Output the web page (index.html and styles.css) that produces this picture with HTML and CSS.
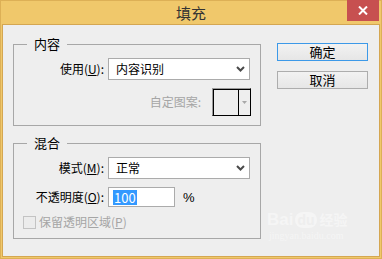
FILE: index.html
```html
<!DOCTYPE html>
<html lang="zh-CN">
  <head>
    <meta charset="UTF-8" />
    <meta name="viewport" content="width=device-width, initial-scale=1.0" />
    <title>填充</title>
    <link rel="stylesheet" href="styles.css">
  </head>
  <body>
    <div class="window">
      <div class="titlebar">
        <span class="title">填充</span>
        <div class="close">
          <svg width="10" height="9" viewBox="0 0 10 9">
            <path d="M1 0.5L9 8.5M9 0.5L1 8.5" stroke="#fff" stroke-width="2" />
          </svg>
        </div>
      </div>

      <div class="client">
        <div class="main">
          <fieldset class="group">
            <legend>内容</legend>
            <div class="row">
              <label class="label">使用(<u>U</u>):</label>
              <div class="select">
                <span>内容识别</span>
                <svg class="chevron" width="9" height="6" viewBox="0 0 9 6">
                  <path d="M1 1L4.5 4.5L8 1" fill="none" stroke="#4a4a4a" stroke-width="2" />
                </svg>
              </div>
            </div>
            <div class="pattern-row">
              <span class="label disabled">自定图案:</span>
              <div class="pattern">
                <div class="swatch"></div>
                <div class="pattern-arrow">
                  <svg width="5" height="3" viewBox="0 0 5 3">
                    <path d="M0 0H5L2.5 3Z" fill="#a8a8a8" />
                  </svg>
                </div>
              </div>
            </div>
          </fieldset>

          <fieldset class="group group-blend">
            <legend>混合</legend>
            <div class="row">
              <label class="label">模式(<u>M</u>):</label>
              <div class="select">
                <span>正常</span>
                <svg class="chevron" width="9" height="6" viewBox="0 0 9 6">
                  <path d="M1 1L4.5 4.5L8 1" fill="none" stroke="#4a4a4a" stroke-width="2" />
                </svg>
              </div>
            </div>
            <div class="row opacity-row">
              <label class="label">不透明度(<u>O</u>):</label>
              <div class="opacity">
                <div class="text-input"><span class="selected">100</span></div>
                <span class="percent">%</span>
              </div>
            </div>
            <div class="check-row">
              <span class="checkbox"></span>
              <span class="disabled">保留透明区域(<u>P</u>)</span>
            </div>
          </fieldset>
        </div>

        <div class="buttons">
          <button class="btn btn-default">确定</button>
          <button class="btn">取消</button>
        </div>
      </div>

      <!-- 水印 -->
      <div class="watermark">
        <div class="wm-logo">Bai<span class="wm-du">du</span><span class="wm-cn">经验</span></div>
        <div class="wm-url">jingyan.baidu.com</div>
      </div>
    </div>
  </body>
</html>
```

FILE: styles.css
```css
* {
  box-sizing: border-box;
}

body {
  margin: 0;
  font-family: "Noto Sans CJK SC", "Noto Sans", sans-serif;
  font-size: 12px;
  color: #000;
}

.window {
  position: relative;
  width: 382px;
  height: 259px;
  background: #f0c86b;
  border: 1px solid #ddb056;
  padding: 0 1px 1px 1px;
  display: flex;
  flex-direction: column;
}

.titlebar {
  height: 23px;
  display: flex;
  align-items: center;
  justify-content: center;
}

.title {
  font-size: 15px;
  color: #333;
  line-height: 20px;
}

.close {
  position: absolute;
  top: -1px;
  right: 2px;
  width: 32px;
  height: 21px;
  background: #c75050;
  display: flex;
  align-items: center;
  justify-content: center;
}

.client {
  flex: 1;
  background: #eeeeee;
  border: 1px solid #d4a651;
  display: flex;
  align-items: flex-start;
  padding: 11px 0 0 10px;
}

.main {
  display: flex;
  flex-direction: column;
  gap: 9px;
}

.group {
  width: 248px;
  margin: 0;
  border: 1px solid #a7a7a7;
  padding: 6px 9px 9px 0;
  display: flex;
  flex-direction: column;
  gap: 8px;
  min-inline-size: 0;
}

.group legend {
  margin-left: 13px;
  padding: 0 7px;
  font-size: 13px;
  line-height: 16px;
}

.group-blend {
  padding-bottom: 8px;
  gap: 0;
}

.row {
  display: grid;
  grid-template-columns: 90px 142px;
  column-gap: 4px;
  align-items: center;
}

.label {
  text-align: right;
  line-height: 16px;
}

.disabled {
  color: #a5a5a5;
}

.select {
  height: 22px;
  background: #fff;
  border: 1px solid #ababab;
  display: flex;
  align-items: center;
  justify-content: space-between;
  padding: 0 4px 0 7px;
  line-height: 16px;
}

.pattern-row {
  display: flex;
  justify-content: flex-end;
  align-items: center;
  gap: 11px;
}

.pattern {
  width: 39px;
  height: 28px;
  display: flex;
  border: 1px solid #000;
  border-top-color: #9a9a9a;
  border-left-color: #9a9a9a;
  box-shadow: inset 1px 1px 0 #000;
}

.swatch {
  width: 26px;
  border-right: 1px solid #000;
}

.pattern-arrow {
  flex: 1;
  display: flex;
  align-items: center;
  justify-content: center;
}

.opacity-row {
  margin-top: 8px;
}

.opacity {
  display: flex;
  align-items: center;
  gap: 8px;
}

.text-input {
  width: 67px;
  height: 20px;
  background: #fff;
  border: 1px solid #ababab;
  padding: 0 0 0 4px;
  display: flex;
  align-items: center;
}

.selected {
  background: #3399ff;
  color: #fff;
  font-size: 13px;
  line-height: 15px;
  padding: 0 1px;
}

.percent {
  font-family: "Liberation Sans", sans-serif;
  font-size: 13px;
}

.check-row {
  margin-top: 7px;
  margin-left: 9px;
  display: flex;
  align-items: center;
  gap: 3px;
  line-height: 16px;
}

.checkbox {
  width: 13px;
  height: 13px;
  border: 1px solid #c3c3c3;
  background: #ececec;
}

.buttons {
  margin: 7px 0 0 16px;
  display: flex;
  flex-direction: column;
  gap: 10px;
}

.btn {
  width: 91px;
  height: 18px;
  padding: 0;
  font-family: inherit;
  font-size: 13px;
  line-height: 14px;
  color: #000;
  background: linear-gradient(#f2f2f2, #e6e6e6);
  border: 1px solid #adadad;
}

.btn-default {
  border-color: #3c99e8;
}

.watermark {
  position: absolute;
  left: 266px;
  top: 208px;
  color: #f5f5f5;
  pointer-events: none;
}

.wm-logo {
  font-family: "Liberation Sans", sans-serif;
  font-size: 17px;
  font-weight: bold;
  line-height: 20px;
}

.wm-du {
  display: inline-block;
  margin-left: 2px;
  padding: 0 2px;
  background: #f5f5f5;
  color: #eeeeee;
  border-radius: 8px;
  font-size: 14px;
  line-height: 16px;
}

.wm-cn {
  margin-left: 3px;
  font-family: "Noto Sans CJK SC", sans-serif;
  font-size: 14px;
}

.wm-url {
  font-family: "Liberation Serif", serif;
  font-size: 10px;
  line-height: 12px;
  margin-left: 2px;
}
```
